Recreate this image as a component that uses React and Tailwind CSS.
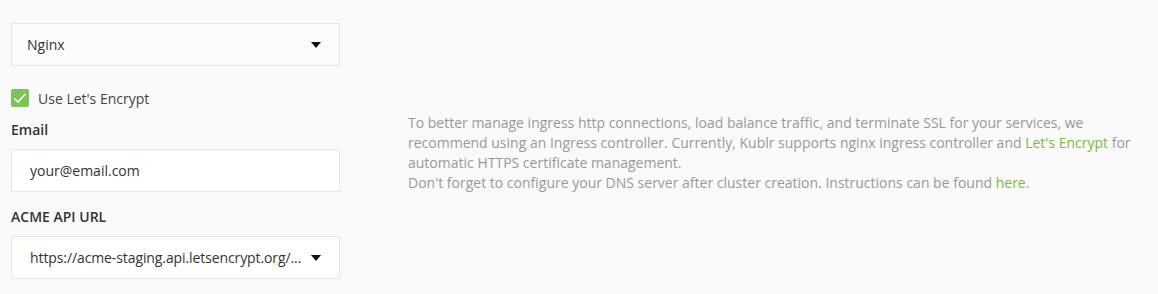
import React, { useState } from 'react';

function Caret() {
  return (
    <svg width="10" height="6" viewBox="0 0 10 6" className="shrink-0">
      <path d="M0 0h10L5 6z" fill="#111" />
    </svg>
  );
}

function App() {
  const [useLe, setUseLe] = useState(true);
  const [email, setEmail] = useState('your@email.com');

  return (
    <div className="h-[294px] w-full bg-[#fafafa] font-['Open_Sans',sans-serif] text-[14px] text-[#333] flex items-start">
      <div className="w-[329px] ml-[11px] mt-[23px] flex flex-col">
        <div className="h-[43px] border border-[#e6e6e6] bg-[#fcfcfc] flex items-center justify-between pl-[15px] pr-[18px]">
          <span className="text-[#333]">Nginx</span>
          <Caret />
        </div>
        <label className="flex items-center h-[20px] mt-[22px] cursor-pointer">
          <span
            className="w-[18px] h-[18px] rounded-[2px] bg-[#7cc35c] flex items-center justify-center"
            onClick={() => setUseLe(!useLe)}
          >
            {useLe && (
              <svg width="18" height="18" viewBox="0 0 18 18">
                <path d="M3.5 9.5l3.5 3.5 7.5-8" stroke="#fff" strokeWidth="1.7" fill="none" />
              </svg>
            )}
          </span>
          <span className="ml-[9px] text-[#444]">Use Let's Encrypt</span>
        </label>
        <div className="mt-[12px] h-[20px] leading-[20px] font-semibold text-[#333]">Email</div>
        <input
          className="mt-[9px] h-[43px] border border-[#e6e6e6] bg-white px-[18px] text-[14px] text-[#333] outline-none"
          value={email}
          onChange={e => setEmail(e.target.value)}
        />
        <div className="mt-[15px] h-[20px] leading-[20px] font-semibold text-[#333]">ACME API URL</div>
        <div className="mt-[9px] h-[43px] border border-[#e6e6e6] bg-white flex items-center justify-between pl-[18px] pr-[18px]">
          <span className="whitespace-nowrap mr-[3px] tracking-[-0.1px] text-[#333]">https://acme-staging.api.letsencrypt.org/...</span>
          <Caret />
        </div>
      </div>
      <div className="ml-[68px] mt-[113px] w-[730px] text-[#999] leading-[20px]">
        <p>
          To better manage ingress http connections, load balance traffic, and terminate SSL for your services, we
          recommend using an Ingress controller. Currently, Kublr supports nginx ingress controller and{' '}
          <a className="text-[#7ab94a]">Let's Encrypt</a> for automatic HTTPS certificate management.
        </p>
        <p>
          Don't forget to configure your DNS server after cluster creation. Instructions can be found{' '}
          <a className="text-[#7ab94a]">here</a>.
        </p>
      </div>
    </div>
  );
}

export default App;
